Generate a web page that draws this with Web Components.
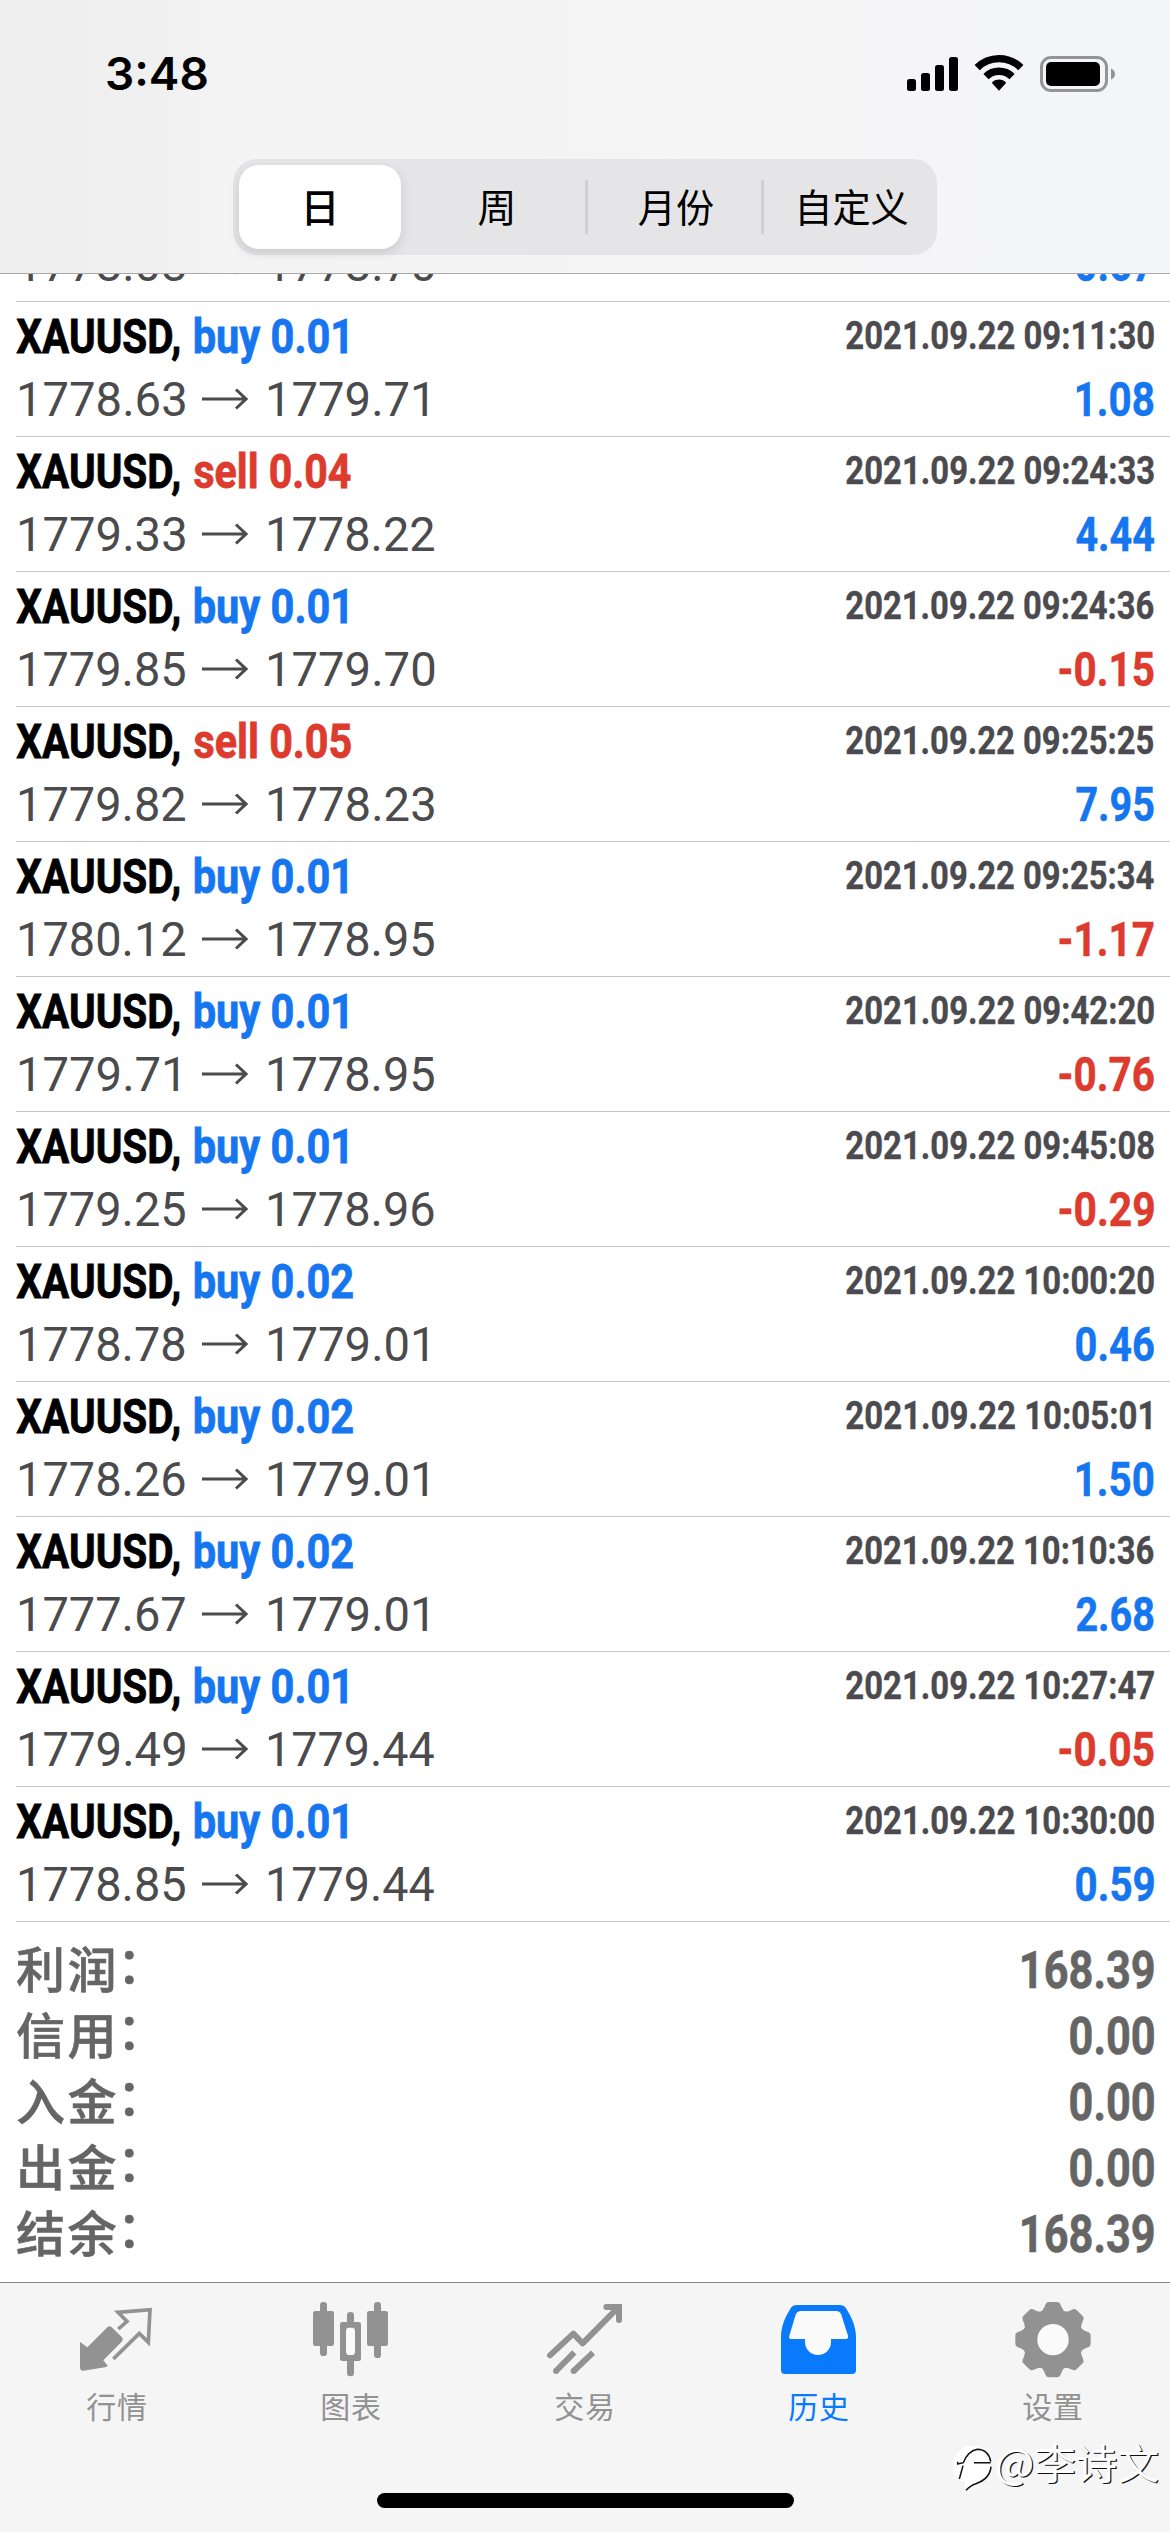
<!DOCTYPE html>
<html lang="zh-CN">
<head>
<meta charset="utf-8">
<title>历史</title>
<style>
html,body{margin:0;padding:0;background:#fff}
body{width:1170px;height:2532px;overflow:hidden;font-family:Roboto,"Noto Sans CJK SC",sans-serif}
</style>
</head>
<body>
<history-app></history-app>
<script>
const define = (name, cls) => customElements.define(name, cls);
const make = (host, html) => { host.attachShadow({mode:'open'}).innerHTML = html; };

/* A line of text condensed or widened so that its ink spans exactly `w` pixels. */
define('fit-text', class extends HTMLElement {
  connectedCallback() {
    if (this.shadowRoot) return;
    make(this, `<style>
      :host{display:block;white-space:pre;flex:none}
      span{display:inline-block;transform-origin:0 50%}
    </style><span><slot></slot></span>`);
    const w = +this.getAttribute('w');
    const cs = getComputedStyle(this);
    const ctx = document.createElement('canvas').getContext('2d');
    ctx.font = `${cs.fontWeight} ${cs.fontSize} ${cs.fontFamily}`;
    const m = ctx.measureText(this.textContent);
    const stroke = parseFloat(cs.webkitTextStrokeWidth) || 0;
    const ink = m.actualBoundingBoxLeft + m.actualBoundingBoxRight + stroke;
    const k = w / ink;
    this.style.width = w + 'px';
    this.shadowRoot.querySelector('span').style.transform =
      `translateX(${(m.actualBoundingBoxLeft + stroke / 2) * k}px) scaleX(${k})`;
  }
});

define('status-bar', class extends HTMLElement {
  connectedCallback() {
    make(this, `<style>
      :host{display:flex;justify-content:space-between;align-items:center;height:148px;padding:0 54px 0 107px;box-sizing:border-box}
      fit-text{font-family:Inter,sans-serif;font-size:45px;font-weight:600;line-height:60px;color:#000}
      svg{display:block}
    </style>
    <fit-text w="100">3:48</fit-text>
    <svg width="209" height="42" viewBox="907 53 209 42">
      <g fill="#000">
        <rect x="907" y="79" width="9" height="12" rx="2.5"/><rect x="921" y="73" width="9" height="18" rx="2.5"/>
        <rect x="935" y="65" width="9" height="26" rx="2.5"/><rect x="949" y="57" width="9" height="34" rx="2.5"/>
        <path d="M999 90.7l-6.6-7.2q-.8-1 .3-1.8c3.7-2.8 8.9-2.8 12.6 0q1.1.8.3 1.8z"/>
      </g>
      <g fill="none" stroke="#000" stroke-width="7.400">
        <path d="M986 76.600a18.600 18.600 0 0 1 26 0"/>
        <path d="M977.200 67.600a31 31 0 0 1 43.600 0"/>
      </g>
      <rect x="1041.500" y="57.500" width="65" height="33" rx="9.500" fill="none" stroke="#949495" stroke-width="3"/>
      <rect x="1046" y="62" width="54" height="24" rx="5" fill="#000"/>
      <path d="M1111 68.500q4 1.500 4 5.500t-4 5.500z" fill="#949495"/>
    </svg>`);
  }
});

define('period-tabs', class extends HTMLElement {
  connectedCallback() {
    make(this, `<style>
      :host{display:grid;grid-template-columns:repeat(4,176px);width:704px;height:96px;margin:11px auto 0 233px;border-radius:24px;background:#e5e5e7}
      div{display:flex;align-items:center;justify-content:center;font:400 39px/60px "Noto Sans CJK SC",sans-serif;color:#000}
      .on{margin:6px 8px 6px 6px;border-radius:20px;background:#fff;box-shadow:0 4px 12px rgba(0,0,0,.12);font-weight:500}
      .sep{background:linear-gradient(#cfcfd1,#cfcfd1) 0 50%/3px 54px no-repeat}
      span{display:block;transform:translateY(-2px)}
      .m{transform:translate(3px,-2px) scaleX(.98)} .c{transform:translate(3px,-2px) scaleX(.98)}
    </style>
    <div class="on"><span>日</span></div><div><span>周</span></div>
    <div class="sep"><span class="m">月份</span></div><div class="sep"><span class="c">自定义</span></div>`);
  }
});

define('app-header', class extends HTMLElement {
  connectedCallback() {
    make(this, `<style>
      :host{display:block;height:274px;box-sizing:border-box;border-bottom:1px solid #a9a9ab;
        background:linear-gradient(90deg,#efeff0 0,#f0f0f1 14%,#f4f4f5 19%,#f5f5f6 70%,#f4f5f8 100%)}
    </style><status-bar></status-bar><period-tabs></period-tabs>`);
  }
});

define('trade-row', class extends HTMLElement {
  connectedCallback() {
    const [side, vol, from, to, time, profit] = this.getAttribute('deal').split('|');
    const sideW = side === 'sell' ? 157 : vol === '0.02' ? 159 : 153;
    const width = p => p.endsWith('1') ? 159 : 166;
    const timeW = time.endsWith('1') ? 305 : 308;
    const pw = profit.startsWith('-') ? 95 : 78;
    make(this, `<style>
      :host{display:flex;flex-direction:column;justify-content:flex-end;gap:14px;height:135px;box-sizing:border-box;flex:none;
        margin-left:16px;padding:0 16px 11px 0;border-bottom:1px solid #c6c6c8}
      .line{display:flex;align-items:flex-start;justify-content:space-between;height:50px;line-height:51px}
      .group{display:flex}
      fit-text{font-weight:700}
      .sym,.side{font-size:48.500px;color:#000;-webkit-text-stroke:.8px currentColor}
      .side{margin-left:14px}
      .side.buy,.pos{color:#1676f0}.side.sell,.neg{color:#dc3b2e}
      .time{font-size:39.500px;line-height:50px;color:#4b4b4f;-webkit-text-stroke:.4px currentColor}
      .price{font-size:47.500px;font-weight:400;color:#4b4b4d}
      .from{margin-left:3px;min-width:166px}
      svg{display:block;margin:12px 20px 0 17px}
      .profit{font-size:47.500px;-webkit-text-stroke:.5px currentColor}
    </style>
    ${time ? `<div class="line"><div class="group"><fit-text class="sym" w="164">XAUUSD,</fit-text><fit-text class="side ${side}" w="${sideW}">${side} ${vol}</fit-text></div>
      <fit-text class="time" w="${timeW}" style="min-width:308px">${time}</fit-text></div>` : ''}
    <div class="line"><div class="group"><fit-text class="price from" w="${width(from)}">${from}</fit-text>
      <svg width="46" height="24" viewBox="0 0 46 24" fill="none" stroke="#4b4b4d" stroke-width="3"><path d="M0 12H44M34 2.500L44 12L34 21.500"/></svg>
      <fit-text class="price" w="${width(to)}">${to}</fit-text></div>
      <fit-text class="profit ${profit.startsWith('-') ? 'neg' : 'pos'}" w="${pw}">${profit}</fit-text></div>`);
  }
});

define('trade-list', class extends HTMLElement {
  connectedCallback() {
    const deals = [
      'buy|0.01|1778.03|1778.70||0.67',
      'buy|0.01|1778.63|1779.71|2021.09.22 09:11:30|1.08',
      'sell|0.04|1779.33|1778.22|2021.09.22 09:24:33|4.44',
      'buy|0.01|1779.85|1779.70|2021.09.22 09:24:36|-0.15',
      'sell|0.05|1779.82|1778.23|2021.09.22 09:25:25|7.95',
      'buy|0.01|1780.12|1778.95|2021.09.22 09:25:34|-1.17',
      'buy|0.01|1779.71|1778.95|2021.09.22 09:42:20|-0.76',
      'buy|0.01|1779.25|1778.96|2021.09.22 09:45:08|-0.29',
      'buy|0.02|1778.78|1779.01|2021.09.22 10:00:20|0.46',
      'buy|0.02|1778.26|1779.01|2021.09.22 10:05:01|1.50',
      'buy|0.02|1777.67|1779.01|2021.09.22 10:10:36|2.68',
      'buy|0.01|1779.49|1779.44|2021.09.22 10:27:47|-0.05',
      'buy|0.01|1778.85|1779.44|2021.09.22 10:30:00|0.59'
    ];
    make(this, `<style>
      :host{display:flex;flex-direction:column;justify-content:flex-end;height:1648px;overflow:hidden}
    </style>${deals.map(d => `<trade-row deal="${d}"></trade-row>`).join('')}`);
  }
});

define('totals-panel', class extends HTMLElement {
  connectedCallback() {
    const rows = [['利润','168.39'],['信用','0.00'],['入金','0.00'],['出金','0.00'],['结余','168.39']];
    make(this, `<style>
      :host{display:block;height:360px;box-sizing:border-box;padding:15px 16px 0;color:#656565}
      div{display:flex;justify-content:space-between;height:66px;line-height:67px}
      .k{font:500 49px/60px "Noto Sans CJK SC",sans-serif;letter-spacing:2.500px;-webkit-text-stroke:.6px #656565}
      i{display:inline-block;font-style:normal;margin-left:-2px;transform:translateY(-5px)}
      fit-text{font-size:51px;font-weight:700;-webkit-text-stroke:.6px currentColor}
    </style>${rows.map(([k, v]) => `<div><span class="k">${k}<i>：</i></span><fit-text w="${v.length > 4 ? 132 : 84}">${v}</fit-text></div>`).join('')}`);
  }
});

define('tab-item', class extends HTMLElement {
  connectedCallback() {
    make(this, `<style>
      :host{display:flex;flex-direction:column;align-items:center;color:#929292}
      :host([active]){color:#0a7afd}
      span{font:400 30px/44px "Noto Sans CJK SC",sans-serif;letter-spacing:.7px;margin-top:2px}
      ::slotted(svg){display:block;width:84px;height:84px;margin-top:14px}
    </style><slot></slot><span>${this.getAttribute('label')}</span>`);
  }
});

define('tab-bar', class extends HTMLElement {
  connectedCallback() {
    const teeth = Array.from({length: 8}, (_, i) =>
      `<path transform="rotate(${i * 45})" d="M-42 -80Q-30 -86 -26 -97L-22 -107Q-19 -113 -13 -113H13Q19 -113 22 -107L26 -97Q30 -86 42 -80Z"/>`).join('');
    make(this, `<style>
      :host{display:flex;flex-direction:column;align-items:center;height:250px;box-sizing:border-box;border-top:1px solid #89898c;background:#f5f5f5}
      nav{display:grid;grid-template-columns:repeat(5,234px);height:210px}
      .home{width:417px;height:15px;border-radius:8px;background:#000}
    </style>
    <nav>
      <tab-item label="行情"><svg viewBox="225 111 252 252"><path fill="currentColor" d="M240 246L262 262L322 202Q328 195 335 202L366 232Q371 239 365 245L310 301L323 317L319 321L250 332Q240 333 240 322Z"/><path fill="none" stroke="currentColor" stroke-width="11" d="M355 207L381 184L354 157L450 149L445 247L418 220L340 297" stroke-linejoin="miter"/></svg></tab-item>
      <tab-item label="图表"><svg viewBox="927 111 252 252" fill="currentColor"><rect x="960" y="126" width="21" height="162" rx="10"/><rect x="939" y="153" width="63" height="105" rx="7"/><rect x="1122" y="126" width="21" height="168" rx="10"/><rect x="1101" y="153" width="63" height="105" rx="7"/><rect x="1041" y="156" width="21" height="193" rx="10"/><rect x="1020" y="186" width="63" height="117" rx="7"/><rect x="1038" y="203" width="27" height="82" rx="10" fill="#fafafa"/></svg></tab-item>
      <tab-item label="交易"><svg viewBox="189 111 252 252" fill="none" stroke="currentColor" stroke-width="18"><path d="M210 286L280 221L308 250L414 143" stroke-linecap="round" stroke-linejoin="round"/><path d="M379 141H417V180" stroke-linecap="round"/><path d="M228 333L283 277M281 333L339 278"/><g fill="currentColor" stroke="none"><circle cx="228" cy="333" r="9"/><circle cx="281" cy="333" r="9"/></g></svg></tab-item>
      <tab-item label="历史" active><svg viewBox="891 111 252 252"><path fill="currentColor" d="M952 135H1078Q1092 135 1098 145C1115 172 1128 200 1128 232V330Q1128 342 1116 342H915Q903 342 903 330V232C903 200 915 172 932 145Q938 135 952 135Z"/><path fill="#fafafa" d="M964 153H1068Q1080 153 1084 164L1104 227Q1106 237 1096 237H1053V246A39 39 0 0 1 975 246V237H935Q925 237 928 227L947 164Q951 153 964 153Z"/></svg></tab-item>
      <tab-item label="设置"><svg viewBox="392 111 252 252"><g transform="translate(518 239)" fill="currentColor"><circle r="91"/>${teeth}<circle r="47" fill="#fafafa"/></g></svg></tab-item>
    </nav>
    <div class="home"></div>`);
  }
});

define('author-mark', class extends HTMLElement {
  connectedCallback() {
    make(this, `<style>
      :host{position:absolute;left:952px;top:2435px;display:flex;align-items:flex-start;gap:3px;height:60px}
      svg{display:block;overflow:visible;margin-top:9px}
      fit-text{font:400 41px/52px "Noto Sans CJK SC",sans-serif;color:#fff;text-shadow:1.200px 1.200px 0 #111}
    </style>
    <svg width="42" height="52" viewBox="36 45 126 156"><path fill="#fff" d="M95 50C135 50 156 74 154 103C152 135 127 158 98 165L78 186L74 160C48 152 36 130 40 104C44 72 65 50 95 50Z"/>
      <path fill="none" stroke="#111" stroke-width="4.500" d="M53 105L70 101Q84 66 112 61Q146 62 152 98M102 101H152M153 113Q150 150 106 165Q94 168 78 184M69 110L58 150M53 98V107"/></svg>
    <fit-text w="161">@李诗文</fit-text>`);
  }
});

define('history-app', class extends HTMLElement {
  connectedCallback() {
    make(this, `<style>
      :host{display:flex;flex-direction:column;position:relative;width:1170px;height:2532px;overflow:hidden;background:#fff}
    </style><app-header></app-header><trade-list></trade-list><totals-panel></totals-panel><tab-bar></tab-bar><author-mark></author-mark>`);
  }
});
</script>
</body>
</html>
